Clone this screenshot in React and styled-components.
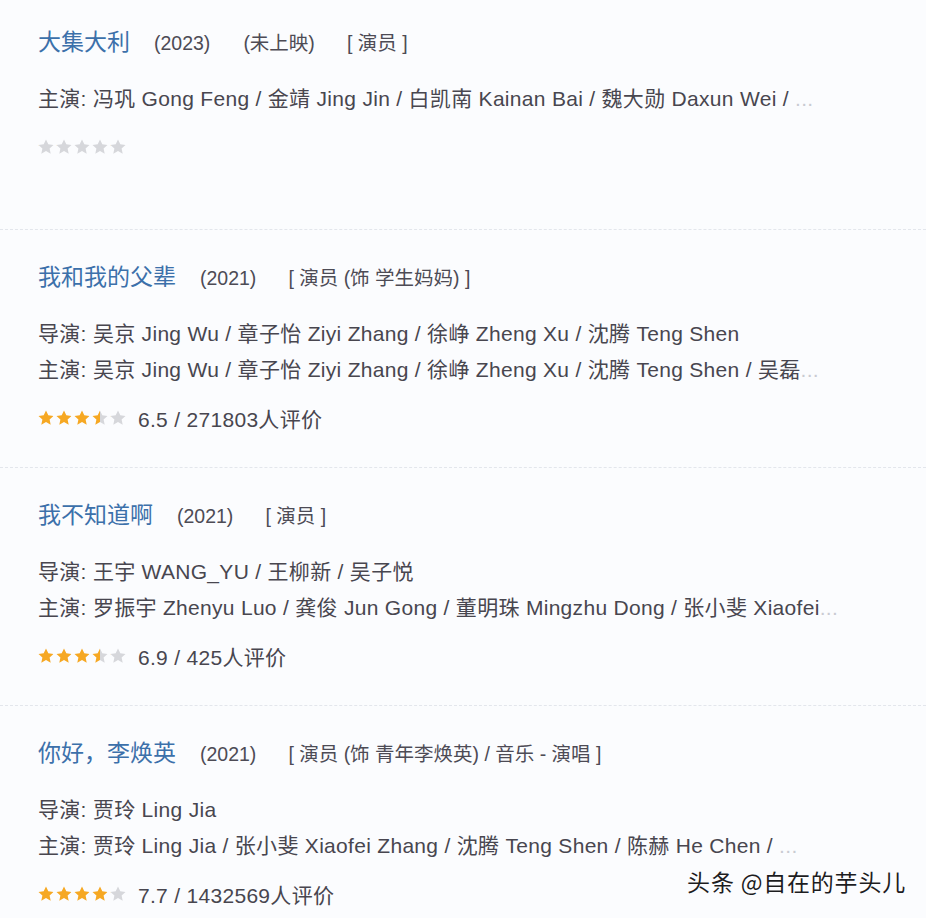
import React from 'react';
import styled, { createGlobalStyle } from 'styled-components';

const GlobalStyle = createGlobalStyle`
  html, body {
    margin: 0;
    padding: 0;
    background: #fbfcfe;
  }
  body {
    font-family: "Liberation Sans", "Noto Sans CJK SC", sans-serif;
  }
`;

const WORKS = [
  {
    id: 1,
    title: '大集大利',
    year: '(2023)',
    note: '(未上映)',
    role: '[ 演员 ]',
    lines: [
      { label: '主演', text: '冯巩 Gong Feng / 金靖 Jing Jin / 白凯南 Kainan Bai / 魏大勋 Daxun Wei /', more: ' ...' }
    ],
    stars: 0,
    rating: null,
    bottom: 67
  },
  {
    id: 2,
    title: '我和我的父辈',
    year: '(2021)',
    role: '[ 演员 (饰 学生妈妈) ]',
    lines: [
      { label: '导演', text: '吴京 Jing Wu / 章子怡 Ziyi Zhang / 徐峥 Zheng Xu / 沈腾 Teng Shen' },
      { label: '主演', text: '吴京 Jing Wu / 章子怡 Ziyi Zhang / 徐峥 Zheng Xu / 沈腾 Teng Shen / 吴磊', more: '...' }
    ],
    stars: 3.5,
    rating: '6.5 / 271803人评价'
  },
  {
    id: 3,
    title: '我不知道啊',
    year: '(2021)',
    role: '[ 演员 ]',
    lines: [
      { label: '导演', text: '王宇 WANG_YU / 王柳新 / 吴子悦' },
      { label: '主演', text: '罗振宇 Zhenyu Luo / 龚俊 Jun Gong / 董明珠 Mingzhu Dong / 张小斐 Xiaofei', more: '...' }
    ],
    stars: 3.5,
    rating: '6.9 / 425人评价'
  },
  {
    id: 4,
    title: '你好，李焕英',
    year: '(2021)',
    role: '[ 演员 (饰 青年李焕英) / 音乐 - 演唱 ]',
    lines: [
      { label: '导演', text: '贾玲 Ling Jia' },
      { label: '主演', text: '贾玲 Ling Jia / 张小斐 Xiaofei Zhang / 沈腾 Teng Shen / 陈赫 He Chen /', more: ' ...' }
    ],
    stars: 4,
    rating: '7.7 / 1432569人评价',
    last: true
  }
];

const STAR_PATH = 'M8 0.5 L10.3 5.3 L15.5 5.9 L11.6 9.5 L12.7 14.8 L8 12.1 L3.3 14.8 L4.4 9.5 L0.5 5.9 L5.7 5.3 Z';

const Star = ({ fill, uid }) => (
  <svg width="16" height="16" viewBox="0 0 16 16">
    <defs>
      <linearGradient id={uid}>
        <stop offset={`${fill * 100}%`} stopColor="#f6a823" />
        <stop offset={`${fill * 100}%`} stopColor="#d6d7db" />
      </linearGradient>
    </defs>
    <path d={STAR_PATH} fill={`url(#${uid})`} />
  </svg>
);

const Stars = ({ value, id }) => (
  <StarRow>
    {[0, 1, 2, 3, 4].map((i) => (
      <Star key={i} uid={`s${id}-${i}`} fill={Math.max(0, Math.min(1, value - i))} />
    ))}
  </StarRow>
);

const WorkItem = ({ work }) => (
  <Item $bottom={work.bottom} $last={work.last}>
    <Header>
      <Title>{work.title}</Title>
      <Meta $gap={24}>{work.year}</Meta>
      {work.note && <Meta $gap={33}>{work.note}</Meta>}
      <Meta $gap={32}>{work.role}</Meta>
    </Header>
    <Lines>
      {work.lines.map((line) => (
        <Line key={line.label}>
          {line.label}: {line.text}
          {line.more && <More>{line.more}</More>}
        </Line>
      ))}
    </Lines>
    <RatingRow>
      <Stars value={work.stars} id={work.id} />
      {work.rating && <RatingText>{work.rating}</RatingText>}
    </RatingRow>
  </Item>
);

export default function App() {
  return (
    <>
      <GlobalStyle />
      <Page>
        {WORKS.map((work) => (
          <WorkItem key={work.id} work={work} />
        ))}
        <Watermark>头条 @自在的芋头儿</Watermark>
      </Page>
    </>
  );
}

const Page = styled.div`
  position: relative;
  width: 926px;
  height: 918px;
  overflow: hidden;
  background: #fbfcfe;
`;

const Item = styled.div`
  padding: 32px 38px ${(p) => p.$bottom || 34}px;
  border-bottom: ${(p) => (p.$last ? 'none' : '1px dashed #e3e6ec')};

  &:first-child {
    padding-top: 27px;
  }
`;

const Header = styled.div`
  display: flex;
  align-items: baseline;
  height: 30px;
  line-height: 30px;
`;

const Title = styled.span`
  font-size: 23px;
  color: #3c70aa;
`;

const Meta = styled.span`
  margin-left: ${(p) => p.$gap}px;
  font-size: 19.5px;
  color: #4d4b55;
`;

const Lines = styled.div`
  margin-top: 24px;
  display: flex;
  flex-direction: column;
`;

const Line = styled.div`
  font-size: 21px;
  line-height: 36px;
  letter-spacing: 0.3px;
  color: #48464f;
  white-space: nowrap;
`;

const More = styled.span`
  color: #c9cbd2;
`;

const RatingRow = styled.div`
  margin-top: 15px;
  height: 30px;
  display: flex;
  align-items: center;
`;

const StarRow = styled.div`
  display: flex;
  gap: 2px;
`;

const RatingText = styled.span`
  margin-left: 12px;
  font-size: 21px;
  letter-spacing: 0.3px;
  color: #48464f;
`;

const Watermark = styled.div`
  position: absolute;
  right: 20px;
  bottom: 20px;
  font-size: 23px;
  letter-spacing: 0.8px;
  color: #1d1d1f;
  text-shadow: 0 0 2px #fff, 0 0 2px #fff;
  font-family: "Noto Sans CJK SC", sans-serif;
`;
